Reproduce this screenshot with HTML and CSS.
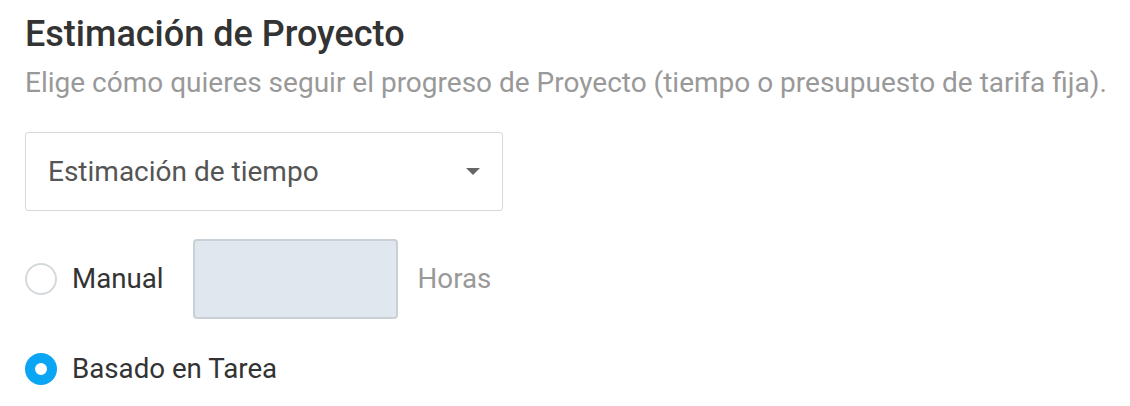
FILE: index.html
```html
<html>
<head>
    <title>Estimación de Proyecto</title>
    <link rel="stylesheet" href="styles.css">
</head>
<body>
    <div class="section">
        <h2>Estimación de Proyecto</h2>
        <p class="hint">Elige cómo quieres seguir el progreso de Proyecto (tiempo o presupuesto de tarifa fija).</p>

        <div class="select">
            <span>Estimación de tiempo</span>
            <span class="caret"></span>
        </div>

        <div class="option manual">
            <span class="radio"></span>
            <label>Manual</label>
            <input type="text" class="hours" disabled>
            <span class="unit">Horas</span>
        </div>

        <div class="option task">
            <span class="radio checked"></span>
            <label>Basado en Tarea</label>
        </div>
    </div>
</body>
</html>
```

FILE: styles.css
```css
body {
    margin: 0; background: white;
    font-family: Roboto, "Liberation Sans", sans-serif;
}

.section {
    padding: 12px 25px;
}

h2 {
    margin: 0; font-size: 36px; font-weight: 500; color: #333;
    line-height: 44px;
}

.hint {
    margin: 9px 0 0; font-size: 28px; color: #999; line-height: 36px;
    white-space: nowrap;
}

.select {
    margin-top: 31px;
    width: 478px; height: 79px; box-sizing: border-box;
    border: 1px solid #d3d8dc; border-radius: 3px;
    display: flex; align-items: center; justify-content: space-between;
    padding: 0 22px;
    font-size: 28px; color: #555;
}

.caret {
    width: 0; height: 0;
    border-left: 7px solid transparent; border-right: 7px solid transparent;
    border-top: 7px solid #666;
}

.option {
    display: flex; align-items: center;
    font-size: 27.7px; color: #333; line-height: 32px;
}

.manual { margin-top: 28px; }

.task { margin-top: 34px; }

.radio {
    width: 32px; height: 32px; box-sizing: border-box;
    border: 2px solid #d5d9dc; border-radius: 50%;
    margin-right: 15px;
}

.radio.checked {
    border: 10px solid #0aa5f3; background: white;
}

.hours {
    width: 205px; height: 80px; box-sizing: border-box;
    margin: 0 20px 0 29px;
    border: 2px solid #c9d0d6; border-radius: 4px; background: #e1e7ee;
}

.unit {
    color: #999;
}
```
